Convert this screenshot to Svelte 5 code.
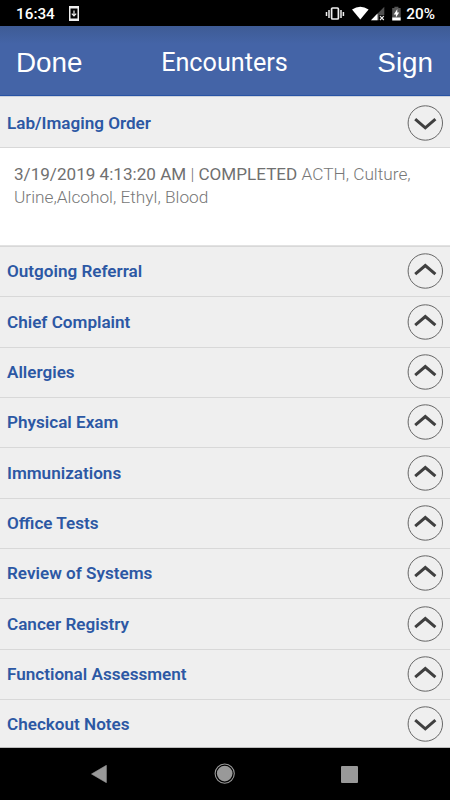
<script lang="ts">
	interface Section {
		title: string;
		open: boolean;
	}

	const sections: Section[] = [
		{ title: 'Outgoing Referral', open: false },
		{ title: 'Chief Complaint', open: false },
		{ title: 'Allergies', open: false },
		{ title: 'Physical Exam', open: false },
		{ title: 'Immunizations', open: false },
		{ title: 'Office Tests', open: false },
		{ title: 'Review of Systems', open: false },
		{ title: 'Cancer Registry', open: false },
		{ title: 'Functional Assessment', open: false },
		{ title: 'Checkout Notes', open: true }
	];
</script>

{#snippet toggle(open: boolean)}
	<svg class="toggle" width="36" height="36" viewBox="0 0 36 36" fill="none">
		<circle cx="18.3" cy="18" r="17.2" stroke="#666" stroke-width="1" />
		<path
			d={open ? 'M8.2 14.2 L18.3 22.8 L28.4 14.2' : 'M8.2 21.2 L18.3 12.5 L28.4 21.2'}
			stroke="#404040"
			stroke-width="3"
		/>
	</svg>
{/snippet}

<div class="screen">
	<div class="status-bar">
		<span class="clock">16:34</span>
		<svg class="download" width="10" height="15" viewBox="0 0 10 15">
			<rect x="0.75" y="0.75" width="8.5" height="13.5" rx="1" fill="#000" stroke="#eee" stroke-width="1.5" />
			<path d="M0 0H10V2.4H0Z M0 12.4H10V15H0Z" fill="#eee" />
			<path d="M5 4.4V9.8 M2.8 7.6L5 9.8L7.2 7.6" fill="none" stroke="#eee" stroke-width="1.2" />
		</svg>
		<svg class="indicators" width="76" height="16" viewBox="0 0 76 16">
			<rect x="6.6" y="2" width="6.8" height="11" rx="1" fill="none" stroke="#eee" stroke-width="1.7" />
			<path d="M4 4V12 M16 4V12 M1.5 6V10 M18.4 6V10" stroke="#eee" stroke-width="1.5" />
			<path d="M27 3.4Q35.3-1.8 43.6 3.4L35.3 13.6Z" fill="#fff" />
			<path d="M59.3 .8V9.3H53.8V14.3H46Z" fill="#505050" />
			<path d="M52.5 7.5V14.3H46Z" fill="#fff" />
			<path d="M55 10.1L58.8 14 M58.8 10.1L55 14" stroke="#eee" stroke-width="1.2" />
			<path d="M67.2 2H69.4V.8H73.4V2H75.7V12H67.2Z" fill="#555" />
			<path d="M67.2 11.4H75.7V14.6H67.2Z M72.3 3L68.8 8.4H70.9V11.4L74.2 6.4H72.3Z" fill="#fff" />
		</svg>
		<span class="battery">20%</span>
	</div>

	<header>
		<span class="action">Done</span>
		<h1>Encounters</h1>
		<span class="action sign">Sign</span>
	</header>

	<main>
		<div class="row first">
			<h2>Lab/Imaging Order</h2>
			{@render toggle(true)}
		</div>
		<p class="detail">
			<span class="strong">3/19/2019 4:13:20 AM</span> | <span class="strong">COMPLETED</span> ACTH, Culture,<br />
			Urine,Alcohol, Ethyl, Blood
		</p>
		{#each sections as section}
			<div class="row">
				<h2>{section.title}</h2>
				{@render toggle(section.open)}
			</div>
		{/each}
	</main>

	<nav>
		<svg width="16" height="18" viewBox="0 0 16 18">
			<path d="M15.4 .3V17.7L.5 9Z" fill="#999" stroke="#999" stroke-width=".6" stroke-linejoin="round" />
		</svg>
		<svg width="22" height="22" viewBox="0 0 22 22">
			<circle cx="11.7" cy="10.6" r="9.6" fill="none" stroke="#999" stroke-width="1.1" />
			<circle cx="11.7" cy="10.6" r="7.8" fill="#999" />
		</svg>
		<svg width="17" height="17" viewBox="0 0 17 17">
			<rect width="17" height="17" rx="1" fill="#999" />
		</svg>
	</nav>
</div>

<style>
	.screen {
		display: flex;
		flex-direction: column;
		width: 450px;
		height: 800px;
		overflow: hidden;
		font-family: Roboto, sans-serif;
		background: #efefef;
	}

	.status-bar {
		display: flex;
		align-items: center;
		box-sizing: border-box;
		height: 26px;
		padding: 1px 15px 0 16px;
		background: #000;
		color: #fff;
		font-size: 15.3px;
		font-weight: 500;
		line-height: 26px;
		flex-shrink: 0;
	}

	.download {
		margin-left: 14px;
	}

	.indicators {
		margin-left: auto;
		margin-right: 5px;
	}

	header {
		display: grid;
		grid-template-columns: 1fr auto 1fr;
		align-items: center;
		box-sizing: border-box;
		height: 70px;
		padding: 4px 17px 0 16px;
		background: linear-gradient(#3e5b95, #4464a7 18px);
		border-bottom: 1px solid #2853a3;
		color: #fff;
		flex-shrink: 0;
	}

	.action {
		font-family: 'Liberation Sans', Arial, sans-serif;
		font-size: 27.8px;
	}

	.sign {
		text-align: right;
	}

	h1 {
		margin: 0;
		font-size: 25.2px;
		font-weight: 400;
	}

	main {
		display: flex;
		flex-direction: column;
		box-sizing: border-box;
		height: 652px;
		overflow: hidden;
		border-bottom: 1px solid #bbb;
		flex-shrink: 0;
	}

	.row {
		display: flex;
		justify-content: space-between;
		align-items: center;
		box-sizing: border-box;
		height: 50.35px;
		padding: 0 7px 1px;
		border-top: 1px solid #d8d8d8;
		background: #efefef;
		flex-shrink: 0;
	}

	.row.first {
		height: 52px;
		padding: 1px 7px 0;
		border-top: 1px solid #ccd1dc;
		border-bottom: 1px solid #d8d8d8;
	}

	h2 {
		margin: 0;
		color: #2c58a4;
		font-size: 17.1px;
		font-weight: 600;
	}

	.detail {
		box-sizing: border-box;
		height: 98px;
		margin: 0;
		padding: 15px 14px 0;
		border-bottom: 1px solid #e2e2e2;
		background: #fff;
		color: #777;
		font-size: 17.25px;
		font-weight: 300;
		line-height: 23px;
		white-space: nowrap;
		flex-shrink: 0;
	}

	.strong {
		color: #707070;
		font-size: 17.1px;
		font-weight: 400;
	}

	nav {
		display: flex;
		justify-content: space-between;
		align-items: center;
		box-sizing: border-box;
		height: 52px;
		padding: 0 92px 0 91px;
		background: #000;
		flex-shrink: 0;
	}
</style>
